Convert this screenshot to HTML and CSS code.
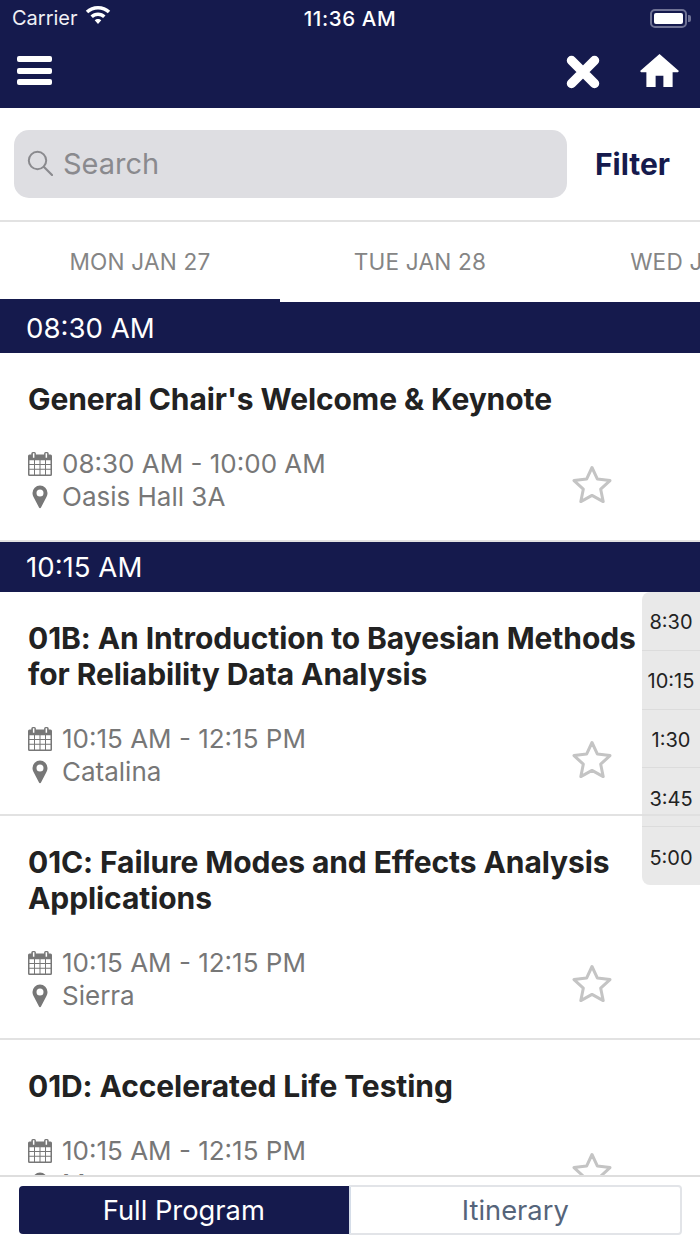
FILE: index.html
```html
<!DOCTYPE html>
<html lang="en">
<head>
<meta charset="utf-8">
<title>Program</title>
<link rel="stylesheet" href="styles.css">
</head>
<body>
<svg class="defs" width="0" height="0" aria-hidden="true">
  <defs>
    <symbol id="cal" viewBox="0 0 24 24">
      <path fill="#777" fill-rule="evenodd" d="M4.800 0h1.600A1.500 1.500 0 0 1 7.900 1.500V2.500h8.200v-1A1.500 1.500 0 0 1 17.600 0h1.600a1.500 1.500 0 0 1 1.500 1.500v1h1.800A1.500 1.500 0 0 1 24 4v18.500a1.500 1.500 0 0 1-1.500 1.500h-21A1.500 1.500 0 0 1 0 22.500V4a1.500 1.500 0 0 1 1.500-1.500h1.800v-1A1.500 1.500 0 0 1 4.800 0zM4.900 1.200v4.600h1.500V1.200zM17.600 1.200v4.600h1.500V1.200zM1.500 8.200v3.800h4.500V8.200zM7 8.200v3.800h4.500V8.200zM12.500 8.200v3.800h4.500V8.200zM18 8.200v3.800h4.500V8.200zM1.500 13v3.800h4.500V13zM7 13v3.800h4.500V13zM12.500 13v3.800h4.500V13zM18 13v3.800h4.500V13zM1.500 17.800v4.700h4.500v-4.700zM7 17.800v4.700h4.500v-4.700zM12.500 17.800v4.700h4.500v-4.700zM18 17.800v4.700h4.500v-4.700z"/>
    </symbol>
    <symbol id="pin" viewBox="0 0 16 24">
      <path fill="#777" fill-rule="evenodd" d="M8 0.500A7.500 7.500 0 0 0 .5 8c0 1.900.6 3 1.300 4.400L7 22.600a1.100 1.100 0 0 0 2 0l5.200-10.200C14.900 11 15.500 9.900 15.500 8A7.500 7.500 0 0 0 8 .5zM8 4.500a3.500 3.500 0 1 1 0 7 3.500 3.500 0 0 1 0-7z"/>
    </symbol>
    <symbol id="star" viewBox="0 0 40 38">
      <path fill="none" stroke="#c4c4c4" stroke-width="3" stroke-linejoin="round" d="M20 2.500l5.400 11.600 12.600 1.500-9.300 8.600 2.500 12.400L20 30.400 8.800 36.600l2.500-12.400L2 15.600l12.600-1.500z"/>
    </symbol>
  </defs>
</svg>
<div class="app">
  <header class="top">
    <div class="status">
      <div class="status-left">
        <span>Carrier</span>
        <svg class="wifi" viewBox="0 0 26 19" aria-hidden="true">
          <path fill="#fff" d="M13 0C8.300 0 4 1.800.8 4.800l2.400 2.500C5.800 4.900 9.200 3.400 13 3.400s7.200 1.500 9.800 3.900l2.400-2.500C22 1.800 17.700 0 13 0zM13 6.500c-2.900 0-5.500 1.100-7.500 2.900l2.400 2.500c1.400-1.200 3.200-2 5.100-2s3.700.8 5.100 2l2.400-2.500c-2-1.800-4.600-2.900-7.500-2.900zM13 13c-1.200 0-2.400.5-3.300 1.300L13 18l3.300-3.700C15.400 13.500 14.200 13 13 13z"/>
        </svg>
      </div>
      <div class="clock">11:36 AM</div>
      <div class="battery"><span class="battery-fill"></span><span class="battery-cap"></span></div>
    </div>
    <nav class="navbar">
      <div class="burger"><span></span><span></span><span></span></div>
      <div class="nav-actions">
        <svg class="close-icon" viewBox="0 0 34 34" aria-hidden="true">
          <path fill="none" stroke="#fff" stroke-width="9.500" stroke-linecap="round" d="M5.500 5.500l23 23M28.500 5.500l-23 23"/>
        </svg>
        <svg class="home-icon" viewBox="0 0 40 35" aria-hidden="true">
          <path fill="#fff" d="M20 0L0 17.500l1 1.200h5.500V34h9.500V22.500h8V34h9.500V18.700H39l1-1.200z"/>
        </svg>
      </div>
    </nav>
  </header>

  <section class="search-row">
    <div class="search-box">
      <svg class="search-icon" viewBox="0 0 26 26" aria-hidden="true">
        <circle cx="10.500" cy="10.500" r="8.700" fill="none" stroke="#8a8a8e" stroke-width="2"/>
        <path d="M17 17l8 8" stroke="#8a8a8e" stroke-width="2.200" stroke-linecap="round"/>
      </svg>
      <span>Search</span>
    </div>
    <div class="filter">Filter</div>
  </section>

  <div class="tabs">
    <div class="tab tab-active">MON JAN 27</div>
    <div class="tab">TUE JAN 28</div>
    <div class="tab">WED JAN 29</div>
  </div>

  <main class="list">
    <div class="time-head">08:30 AM</div>
    <article class="session single">
      <h2>General Chair's Welcome &amp; Keynote</h2>
      <div class="meta"><svg class="ic-cal"><use href="#cal"/></svg><span>08:30 AM - 10:00 AM</span></div>
      <div class="meta"><svg class="ic-pin"><use href="#pin"/></svg><span>Oasis Hall 3A</span></div>
      <svg class="ic-star"><use href="#star"/></svg>
    </article>
    <div class="time-head time-head-next">10:15 AM</div>
    <article class="session">
      <h2>01B: An Introduction to Bayesian Methods for Reliability Data Analysis</h2>
      <div class="meta"><svg class="ic-cal"><use href="#cal"/></svg><span>10:15 AM - 12:15 PM</span></div>
      <div class="meta"><svg class="ic-pin"><use href="#pin"/></svg><span>Catalina</span></div>
      <svg class="ic-star"><use href="#star"/></svg>
    </article>
    <article class="session">
      <h2>01C: Failure Modes and Effects Analysis Applications</h2>
      <div class="meta"><svg class="ic-cal"><use href="#cal"/></svg><span>10:15 AM - 12:15 PM</span></div>
      <div class="meta"><svg class="ic-pin"><use href="#pin"/></svg><span>Sierra</span></div>
      <svg class="ic-star"><use href="#star"/></svg>
    </article>
    <article class="session single">
      <h2>01D: Accelerated Life Testing</h2>
      <div class="meta"><svg class="ic-cal"><use href="#cal"/></svg><span>10:15 AM - 12:15 PM</span></div>
      <div class="meta"><svg class="ic-pin"><use href="#pin"/></svg><span>Mesa</span></div>
      <svg class="ic-star"><use href="#star"/></svg>
    </article>
    <aside class="jump">
      <div>8:30</div>
      <div>10:15</div>
      <div>1:30</div>
      <div>3:45</div>
      <div>5:00</div>
    </aside>
  </main>

  <footer class="bottom">
    <div class="segment">
      <div class="seg seg-on">Full Program</div>
      <div class="seg seg-off">Itinerary</div>
    </div>
  </footer>
</div>
</body>
</html>
```

FILE: styles.css
```css
* { box-sizing: border-box; }
html, body { margin: 0; padding: 0; background: #fff; }
body { font-family: Inter, "Liberation Sans", sans-serif; }
.defs { display: block; height: 0; }

.app {
  width: 700px;
  height: 1244px;
  display: flex;
  flex-direction: column;
  overflow: hidden;
}

.top { background: #151a4d; height: 108px; flex: none; color: #fff; }
.status {
  height: 36px;
  display: grid;
  grid-template-columns: 1fr auto 1fr;
  align-items: center;
  padding: 0 12px;
  font-size: 20px;
}
.status-left { display: flex; align-items: center; gap: 7px; color: #f0f0f5; }
.wifi { width: 26px; height: 19px; margin-top: -6px; }
.clock { font-size: 20.500px; font-weight: 500; letter-spacing: 0.6px; }
.battery {
  justify-self: end;
  position: relative;
  width: 37px;
  height: 19px;
  border: 2px solid #6f7294;
  border-radius: 5px;
  padding: 2px;
  margin-right: 1px;
}
.battery-fill { display: block; height: 100%; background: #fff; border-radius: 2px; }
.battery-cap {
  position: absolute;
  right: -6px;
  top: 4px;
  width: 3px;
  height: 7px;
  background: #6f7294;
  border-radius: 0 2px 2px 0;
}

.navbar {
  height: 72px;
  display: flex;
  align-items: center;
  justify-content: space-between;
  padding: 0 21px 3px 17px;
}
.burger { display: flex; flex-direction: column; gap: 5.500px; width: 35px; }
.burger span { height: 6px; background: #fff; border-radius: 2px; }
.nav-actions { display: flex; align-items: center; gap: 40px; }
.close-icon { width: 34px; height: 34px; margin-top: 3px; }
.home-icon { width: 39px; height: 34px; }

.search-row {
  height: 114px;
  flex: none;
  display: flex;
  align-items: center;
  padding: 0 30px 0 14px;
  border-bottom: 2px solid #e2e2e2;
  justify-content: space-between;
}
.search-box {
  width: 553px;
  height: 68px;
  background: #dedee2;
  border-radius: 15px;
  display: flex;
  align-items: center;
  gap: 10px;
  padding: 0 0 2px 13px;
  color: #8a8a8e;
  font-size: 29px;
}
.search-icon { width: 26px; height: 26px; }
.filter { font-size: 30px; font-weight: 700; color: #151a4d; }

.tabs { height: 80px; flex: none; display: flex; overflow: hidden; }
.tab {
  flex: 0 0 280px;
  display: flex;
  align-items: center;
  justify-content: center;
  padding-bottom: 2px;
  font-size: 22.600px;
  color: #858585;
  letter-spacing: 0.2px;
  white-space: nowrap;
}
.tab-active { border-bottom: 3px solid #151a4d; padding-top: 3px; }

.list { position: relative; flex: 1; min-height: 0; overflow: hidden; }
.time-head {
  height: 51px;
  background: #151a4d;
  color: #fff;
  font-size: 27.600px;
  display: flex;
  align-items: center;
  padding: 1px 0 0 26px;
}
.time-head-next { height: 50px; padding-top: 0; }
.session {
  position: relative;
  height: 224px;
  padding: 28px 60px 0 28px;
  border-bottom: 2px solid #e2e2e2;
}
.session.single { height: 189px; }
.session h2 {
  margin: 0 -4px 30px 0;
  font-size: 30px;
  line-height: 36px;
  font-weight: 700;
  letter-spacing: -0.08px;
  color: #222;
}
.meta {
  display: flex;
  align-items: center;
  height: 33px;
  font-size: 26px;
  color: #777;
}
.meta span { margin-left: 10px; }
.ic-cal { width: 24px; height: 24px; flex: none; }
.ic-pin { width: 24px; height: 24px; flex: none; }
.ic-star {
  position: absolute;
  right: 88px;
  bottom: 36px;
  width: 40px;
  height: 38px;
}
.session.single .ic-star { bottom: 37px; }

.jump {
  position: absolute;
  right: 0;
  top: 290px;
  width: 58px;
  height: 293px;
  background: rgba(224, 224, 224, 0.7);
  border-radius: 8px 0 0 8px;
  display: flex;
  flex-direction: column;
}
.jump div {
  flex: 1;
  display: flex;
  align-items: center;
  justify-content: center;
  padding-top: 3px;
  font-size: 20px;
  color: #222;
}
.jump div + div { border-top: 1px solid #dcdcdc; }

.bottom {
  height: 69px;
  flex: none;
  background: #fff;
  border-top: 2px solid #dedede;
  padding: 8px 18px 0 19px;
}
.segment { display: flex; height: 50px; }
.seg {
  flex: 1;
  display: flex;
  align-items: center;
  justify-content: center;
  font-size: 27.300px;
}
.seg-on { background: #151a4d; color: #fff; border-radius: 4px 0 0 4px; margin: 1px 0; }
.seg-off {
  color: #55647a;
  border: 2px solid #e2e4e8;
  border-left-color: #d5dde8;
  border-radius: 0 4px 4px 0;
}
```
